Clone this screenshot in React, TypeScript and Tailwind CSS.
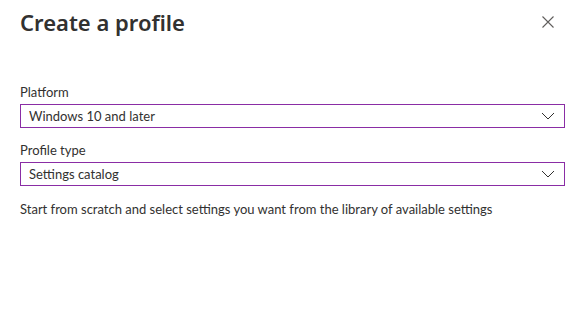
import React from 'react';

// Create a profile panel

const fontStack = { fontFamily: '"Segoe UI", Lato, "Noto Sans", sans-serif' };
const titleFont = { fontFamily: '"Segoe UI", "Noto Sans", sans-serif' };

function Chevron() {
  return (
    <svg width="14" height="8" viewBox="0 0 14 8" fill="none" stroke="#323130" strokeWidth="1">
      <path d="M1 1l6 6 6-6" />
    </svg>
  );
}

function SelectBox({ value }: { value: string }) {
  return (
    <div className="flex h-[24px] w-[545px] items-center justify-between border border-[#8a2da5] bg-white pl-[8px] pr-[9px]">
      <span className="text-[13px] leading-none text-[#323130]">{value}</span>
      <Chevron />
    </div>
  );
}

export default function App() {
  return (
    <div className="h-[336px] w-[583px] bg-white" style={fontStack}>
      <div className="flex items-start justify-between pl-[20px] pr-[29px] pt-[7px]">
        <h1 className="text-[22px] font-semibold leading-[30px] text-[#323130]" style={titleFont}>
          Create a profile
        </h1>
        <button className="mt-[9px]" aria-label="Close">
          <svg width="12" height="12" viewBox="0 0 12 12" stroke="#605e5c" strokeWidth="1.1">
            <path d="M0.5 0.5l11 11M11.5 0.5l-11 11" />
          </svg>
        </button>
      </div>

      <div className="mt-[46px] px-[20px]">
        <div className="text-[13px] leading-[18px] text-[#323130]">Platform</div>
        <div className="mt-[3px]">
          <SelectBox value="Windows 10 and later" />
        </div>

        <div className="mt-[13px] text-[13px] leading-[18px] text-[#323130]">Profile type</div>
        <div className="mt-[3px]">
          <SelectBox value="Settings catalog" />
        </div>

        <p className="mt-[14px] text-[13px] leading-[18px] text-[#323130]">
          Start from scratch and select settings you want from the library of available settings
        </p>
      </div>
    </div>
  );
}
